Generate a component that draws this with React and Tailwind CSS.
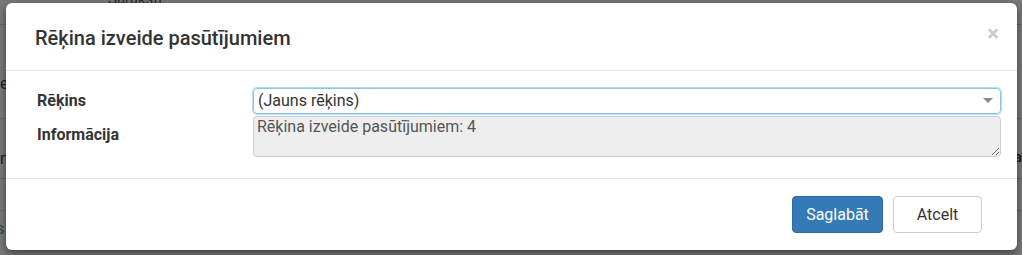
export default function App() {
  const font = { fontFamily: 'Roboto, "Liberation Sans", sans-serif' };

  return (
    <div className="relative h-[255px] w-[1022px] overflow-hidden bg-[#7a7a7a]" style={font}>
      {/* page behind the backdrop */}
      <div className="absolute inset-0 text-[14px] text-[#1a1a1a]">
        <div className="absolute left-[108px] top-[-12px] text-[15px] text-[#2a2a2a]">Saraksti</div>
        <div className="absolute left-0 right-0 top-[24px] h-px bg-[#6a6a6a]" />
        <div className="absolute left-0 top-[72px] text-[16px] text-[#222]">e</div>
        <div className="absolute left-0 right-0 top-[118px] h-px bg-[#6a6a6a]" />
        <div className="absolute left-0 top-[147px] text-[16px] text-[#222]">n</div>
        <div className="absolute right-0 top-[147px] text-[14px] font-bold text-[#222]">a</div>
        <div className="absolute left-0 right-0 top-[178px] h-px bg-[#6a6a6a]" />
        <div className="absolute left-0 right-0 top-[210px] h-px bg-[#6a6a6a]" />
        <div className="absolute left-[-4px] top-[217px] text-[16px] text-[#2b4f2b]">s</div>
      </div>

      {/* modal */}
      <div className="absolute left-[6px] top-[3px] flex h-[247px] w-[1011px] flex-col rounded-[6px] bg-white shadow-[0_3px_9px_rgba(0,0,0,0.5)]">
        <div className="flex h-[68px] items-center justify-between border-b border-[#e5e5e5] pl-[29px] pr-[18px]">
          <h4 className="mt-[3px] text-[20px] font-medium text-[#333]">Rēķina izveide pasūtījumiem</h4>
          <span className="mb-[6px] text-[22px] font-bold leading-none text-[#c8c8c8]">×</span>
        </div>

        <div className="flex flex-1 pl-[31px] pr-[16px] pt-[17px]">
          <div className="flex w-[216px] flex-col text-[16px] font-bold text-[#333]">
            <div className="flex h-[26px] items-center">Rēķins</div>
            <div className="flex h-[43px] items-center pb-[2px]">Informācija</div>
          </div>
          <div className="flex flex-1 flex-col gap-[2px]">
            <div className="flex h-[26px] items-center justify-between rounded-[4px] border border-[#8ec3ee] px-[4px] text-[16px] text-[#333] shadow-[0_0_0_1px_rgba(102,175,233,0.45)]">
              <span>(Jauns rēķins)</span>
              <svg width="10" height="6" viewBox="0 0 10 6" className="mr-[3px]">
                <path d="M0 0 L10 0 L5 5 Z" fill="#888" />
              </svg>
            </div>
            <textarea
              readOnly
              value="Rēķina izveide pasūtījumiem: 4"
              className="h-[41px] resize rounded-[4px] border border-[#ccc] bg-[#eee] px-[3px] py-0 text-[16px] leading-[20px] text-[#555] outline-none"
              style={font}
            />
          </div>
        </div>

        <div className="flex h-[72px] items-center justify-end gap-[10px] border-t border-[#e5e5e5] pr-[35px]">
          <button className="h-[37px] w-[91px] rounded-[4px] border border-[#2e6da4] bg-[#337ab7] text-[16px] text-white">
            Saglabāt
          </button>
          <button className="h-[37px] w-[89px] rounded-[4px] border border-[#ccc] bg-white text-[16px] text-[#333]">
            Atcelt
          </button>
        </div>
      </div>
    </div>
  );
}
